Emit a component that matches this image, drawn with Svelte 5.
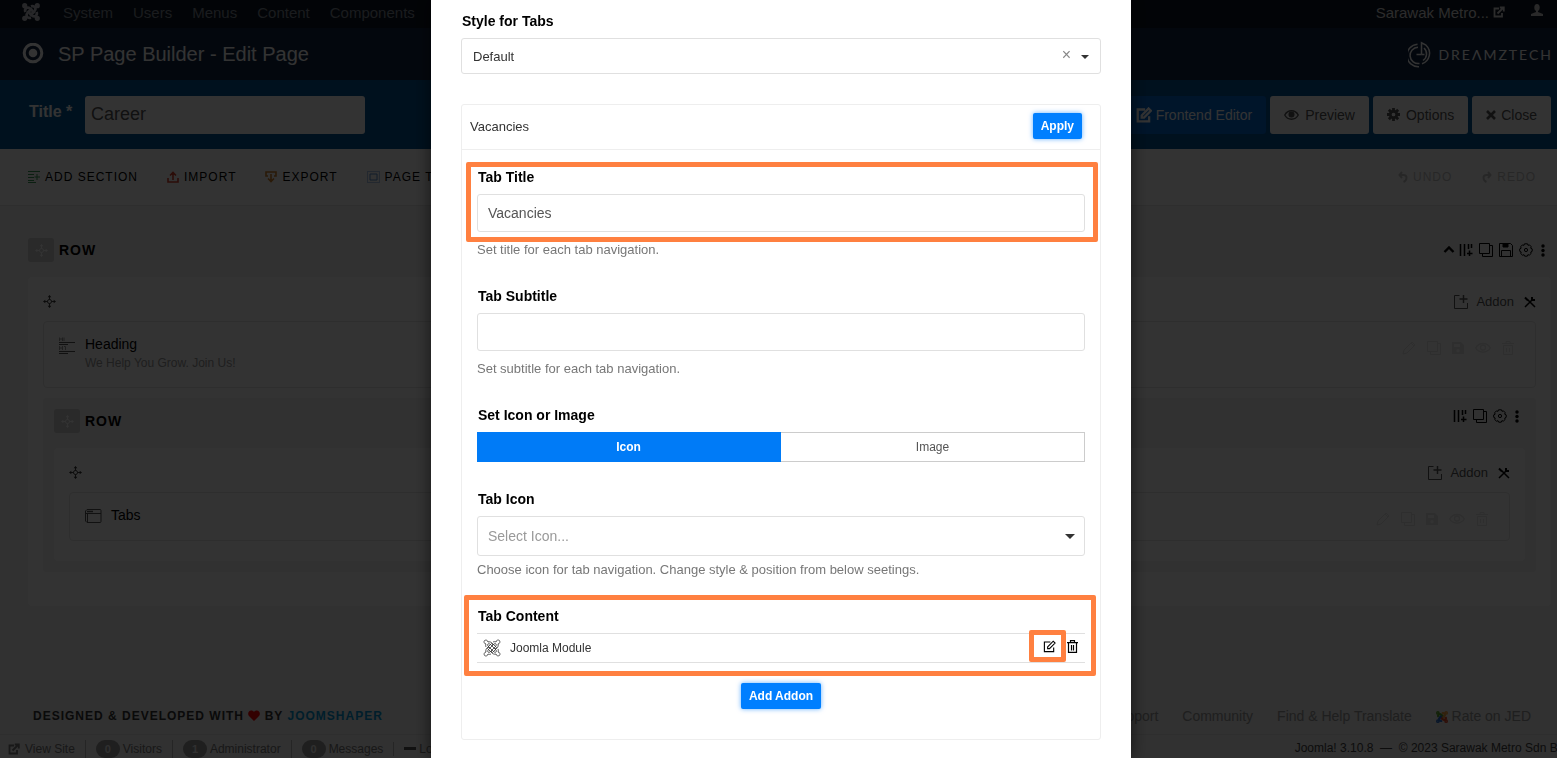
<script>
  const menu = ['System', 'Users', 'Menus', 'Content', 'Components'];
  const counters = [
    { n: 0, label: 'Visitors' },
    { n: 1, label: 'Administrator' },
    { n: 0, label: 'Messages' }
  ];
  let title = $state('Career');
  let tabTitle = $state('Vacancies');
  let subtitle = $state('');
  let media = $state('icon');
</script>

{#snippet knot(size, w)}
  <svg width={size} height={size} viewBox="0 0 16 16" fill="none" stroke="currentColor" stroke-width={w}>
    {#each [0, 90, 180, 270] as a}
      <g transform="rotate({a} 8 8)">
        <circle cx="2.4" cy="2.4" r="1.1" />
        <path d="M3 8C2 5 4.600 2.800 7.200 5L11.200 9" />
      </g>
    {/each}
  </svg>
{/snippet}

{#snippet outlineKnot()}
  <svg width="18" height="18" viewBox="0 0 18 18" fill="none" stroke="#333" stroke-width="0.8">
    {#each [0, 90, 180, 270] as a}
      <g transform="rotate({a} 9 9)">
        <path d="M3 8C2.500 6.800 2.600 5.800 3 5C.8 4.800.6 2.200 1.600 1.500C3 .6 4.800 1.300 5 3C6.500 2.500 8 3 9 4L13.500 8.500L12 10L7.500 5.500C5.500 3.800 3.800 5.200 5 7L6.500 8.500" />
      </g>
    {/each}
  </svg>
{/snippet}

{#snippet move()}
  <svg width="13" height="13" viewBox="0 0 14 14" fill="none" stroke="currentColor">
    <circle cx="7" cy="7" r="2.2" />
    <path d="M7 5V1M7 9v4M5 7H1M9 7h4" />
    <path fill="currentColor" stroke="none" d="M7 0l2 2.500H5zM7 14l2-2.500H5zM0 7l2.500-2v4zM14 7l-2.500-2v4z" />
  </svg>
{/snippet}

{#snippet columns()}
  <svg width="14" height="14" viewBox="0 0 14 14" fill="none" stroke="currentColor" stroke-width="1.500">
    <path d="M1.500 1v12M5.500 1v12M9.500 1v5M12.500 1v4M10.500 7.500v5.500M8 10.500h5.500" />
  </svg>
{/snippet}

{#snippet copy()}
  <svg width="14" height="14" viewBox="0 0 14 14" fill="none" stroke="currentColor">
    <path d="M.5.5h10v10H.5zM10.500 2.500h3v11h-10v-3" />
  </svg>
{/snippet}

{#snippet gear()}
  <svg width="14" height="14" viewBox="0 0 14 14" fill="none" stroke="currentColor">
    <path d="M5.500.8h3l.5 1.500 1.500-.4 1.700 1.800-.5 1.500 1.500.7v2.400l-1.400.7.3 1.500-1.700 1.600-1.500-.4-.6 1.500H5.700l-.7-1.500-1.500.5-1.800-1.700.5-1.500L.7 8.300V5.900l1.400-.7-.4-1.500 1.700-1.800 1.600.4z" />
    <circle cx="7" cy="7" r="1.600" />
  </svg>
{/snippet}

{#snippet dots()}
  <svg width="4" height="14" viewBox="0 0 4 14" fill="currentColor">
    <circle cx="2" cy="3" r="1.700" /><circle cx="2" cy="7.500" r="1.700" /><circle cx="2" cy="12" r="1.700" />
  </svg>
{/snippet}

{#snippet external()}
  <svg width="12" height="12" viewBox="0 0 12 12" fill="none" stroke="currentColor" stroke-width="1.800">
    <path d="M6 2.500H1.500v8H9V7M4.500 7.500L10 2M6.800 1.500h4v4" />
  </svg>
{/snippet}

{#snippet pen(size, w)}
  <svg width={size} height={size} viewBox="0 0 14 14" fill="none" stroke="currentColor" stroke-width={w}>
    <path d="M8 2.200H1.500v10.300h10V8" />
    <path d="M5 7.500L11 1.300l2 2L7 9.300H5z" />
  </svg>
{/snippet}

{#snippet addonBar()}
  <div class="addon-bar">
    <span class="drag">{@render move()}</span>
    <button class="plain add">
      <svg width="14" height="14" viewBox="0 0 14 14" fill="none" stroke="currentColor">
        <path d="M5.500.5h-5v13h13V8" /><path d="M9.500 0v8M5.500 4h8" stroke-width="1.500" />
      </svg>
      Addon
    </button>
    <button class="plain tools" aria-label="Column options">
      <svg width="12" height="12" viewBox="0 0 12 12" fill="none" stroke="currentColor" stroke-width="1.500">
        <path d="M1 11l6.500-6.500M11 11L4 4" /><path stroke-width="2" d="M1 1.500l3 3M8 1v3h3" />
      </svg>
    </button>
  </div>
{/snippet}

{#snippet actions()}
  <div class="actions">
    <svg width="14" height="14" viewBox="0 0 14 14" fill="none" stroke="currentColor"><path d="M1 13l1-4L10 1l3 3-8 8zM9 2l3 3" /></svg>
    {@render copy()}
    <svg width="12" height="12" viewBox="0 0 12 12"><path fill="currentColor" fill-rule="evenodd" d="M0 0h9l3 3v9H0zM2 2v3h6V2zM6 7a1.700 1.700 0 100 3.400A1.700 1.700 0 006 7z" /></svg>
    <svg width="16" height="12" viewBox="0 0 16 12" fill="none" stroke="currentColor" stroke-width="1.300"><path d="M.7 6C4 0 12 0 15.300 6 12 11.500 4 11.500.7 6z" /><circle cx="8" cy="5.500" r="2.500" /></svg>
    <svg width="12" height="14" viewBox="0 0 12 14" fill="none" stroke="currentColor"><path d="M0 2.500h12M4 2.500v-2h4v2M1.500 4.500v9h9v-9zM4.500 7v4M7.500 7v4" /></svg>
  </div>
{/snippet}

<div class="page">
  <nav class="top">
    <span class="joomla">{@render knot(18, 2.4)}</span>
    {#each menu as m}<a href="#{m}">{m}</a>{/each}
    <a class="site" href="#site">Sarawak Metro... {@render external()}</a>
    <svg class="user" width="12" height="12" viewBox="0 0 12 12" fill="currentColor"><ellipse cx="6" cy="3.500" rx="2.700" ry="3.500" /><path d="M5 6h2v2l5 2v2H0v-2l5-2z" /></svg>
  </nav>

  <header>
    <svg width="22" height="22" viewBox="0 0 22 22"><circle cx="11" cy="10" r="8.800" fill="none" stroke="currentColor" stroke-width="3" /><circle cx="11" cy="10" r="4.300" fill="currentColor" /></svg>
    <h1>SP Page Builder - Edit Page</h1>
    <div class="brand">
      <svg width="25" height="27" viewBox="0 0 25 27" fill="none" stroke="currentColor" stroke-width="1.500">
        <path d="M9.500 3.200A11 11 0 1011 25.700" />
        <path d="M10 6.200a8.200 8.200 0 101.500 16.300" />
        <path d="M13.500 13.500H8.500M13.500 13.500V1.800l4.500 2.400a11 11 0 01-4 18.500" />
        <path d="M16 7a8 8 0 01-1 12.500M16.500 13.500h-3" />
      </svg>
      <span>DREΛMZTECH</span>
    </div>
  </header>

  <div class="titlebar">
    <label for="page-title">Title *</label>
    <input id="page-title" bind:value={title} />
    <div class="buttons">
      <button class="front">{@render pen(16, 2)}Frontend Editor</button>
      <button>
        <svg width="15" height="12" viewBox="0 0 16 12" fill="none" stroke="currentColor" stroke-width="1.500"><path d="M.8 6C4 0 12 0 15.200 6 12 12 4 12 .8 6z" /><circle cx="8" cy="5.500" r="2.500" fill="currentColor" /></svg>Preview
      </button>
      <button>
        <svg width="13" height="13" viewBox="0 0 14 14" fill="none" stroke="currentColor"><circle cx="7" cy="7" r="3.500" stroke-width="3" /><path stroke-width="3" d="M7 0v3M7 11v3M0 7h3M11 7h3M2 2l2 2M10 10l2 2M2 12l2-2M10 4l2-2" /></svg>Options
      </button>
      <button class="close">
        <svg width="10" height="10" viewBox="0 0 10 10" stroke="currentColor" stroke-width="2.600"><path d="M1 1l8 8M9 1L1 9" /></svg>Close
      </button>
    </div>
  </div>

  <div class="toolbar">
    <button class="plain">
      <svg width="12" height="12" viewBox="0 0 12 12" fill="none" stroke="#3b9a55"><path d="M0 .5h12M0 3.500h6M0 6.500h6M0 9.500h6M0 11.500h8M9 3v6M6.500 6h5.500" /></svg>Add Section
    </button>
    <button class="plain">
      <svg width="12" height="12" viewBox="0 0 12 12" fill="none" stroke="#d8402a" stroke-width="1.600"><path d="M1 7v4h10V7M6 9V2M3 4.500L6 1.500l3 3" /></svg>Import
    </button>
    <button class="plain">
      <svg width="12" height="12" viewBox="0 0 12 12" fill="none" stroke="#d0802a" stroke-width="1.600"><path d="M3 5H1V1h10v4H9M6 3v7M3 7.500l3 3 3-3" /></svg>Export
    </button>
    <button class="plain">
      <svg width="13" height="12" viewBox="0 0 13 12" fill="none" stroke="#5a8ed0"><path stroke-dasharray="1 1" d="M.5.5h12v11H.5z" /><path d="M3 3h7v6H3z" /></svg>Page Templates
    </button>
    <div class="history">
      <button class="plain" disabled>
        <svg width="10" height="12" viewBox="0 0 10 12" fill="none" stroke="currentColor" stroke-width="2"><path d="M4 1L1.500 4l2.500 3M1.500 4h4c4 0 4 5 0 7" /></svg>Undo
      </button>
      <button class="plain" disabled>
        <svg width="10" height="12" viewBox="0 0 10 12" fill="none" stroke="currentColor" stroke-width="2"><path d="M6 1l2.500 3L6 7M8.500 4h-4c-4 0-4 5 0 7" /></svg>Redo
      </button>
    </div>
  </div>

  <main>
    <div class="row-head">
      <span class="handle">{@render move()}</span><strong>ROW</strong>
      <div class="row-tools">
        <svg class="chev" width="12" height="8" viewBox="0 0 12 8" fill="none" stroke="currentColor" stroke-width="2.400"><path d="M1.500 6L6 1.500 10.500 6" /></svg>
        {@render columns()}
        {@render copy()}
        <svg width="14" height="14" viewBox="0 0 14 14" fill="none" stroke="currentColor"><path d="M.5.5h11l2 2v11H.5zM2.500 13V7.500h9V13" /><path fill="currentColor" d="M4 1h5v3H4z" /></svg>
        {@render gear()}
        {@render dots()}
      </div>
    </div>
    <section class="column">
      {@render addonBar()}
      <article class="addon heading">
        <svg width="17" height="17" viewBox="0 0 17 17" fill="none" stroke="#555"><path d="M.5.500v3.500M3.500.500v3.500M.5 2h3M5 .5v3.500M.5 9v4M3.500 9v4M.5 11h3M5 9.500h1.500v3.500" stroke="#999" /><path d="M0 5.500h16M0 7.500h9M0 14.500h16M0 16.500h9" /></svg>
        <div><h3>Heading</h3><p>We Help You Grow. Join Us!</p></div>
        {@render actions()}
      </article>
      <div class="nested">
        <div class="row-head">
          <span class="handle">{@render move()}</span><strong>ROW</strong>
          <div class="row-tools">
            {@render columns()}
            {@render copy()}
            {@render gear()}
            {@render dots()}
          </div>
        </div>
        <section class="column">
          {@render addonBar()}
          <article class="addon tabs">
            <svg width="17" height="15" viewBox="0 0 17 15" fill="none" stroke="#555"><path d="M2 1.500h13q1 0 1 1v11q0 1-1 1H2l-1.500-1.500v-10zM.5 5.500h15.500M2.500 5.500V14" /><path d="M2 3.500h6" stroke-width="1.500" /></svg>
            <div><h3>Tabs</h3></div>
            {@render actions()}
          </article>
        </section>
      </div>
    </section>
  </main>

  <footer>
    <p>DESIGNED &amp; DEVELOPED WITH
      <svg width="12" height="11" viewBox="0 0 12 11" fill="#f00"><path d="M6 11L1 6C-1.500 3 2-2 6 1.700 10-2 13.500 3 11 6z" /></svg>
      BY <a href="#shaper">JOOMSHAPER</a></p>
    <div class="links">
      <a href="#support">Support</a>
      <a href="#community">Community</a>
      <a href="#translate">Find &amp; Help Translate</a>
      <a href="#jed">
        <svg width="12" height="12" viewBox="0 0 16 16" fill="none" stroke-width="3">
          {#each ['#5ba829', '#f9a541', '#e84a2a', '#2a6fd0'] as c, i}
            <g stroke={c} transform="rotate({i * 90} 8 8)"><circle cx="2.500" cy="2.500" r="1" /><path d="M3 8C2 5 4.600 2.800 7.200 5L9.500 7.500" /></g>
          {/each}
        </svg>
        Rate on JED</a>
    </div>
  </footer>

  <div class="status">
    <a href="#view">{@render external()}View Site</a>
    {#each counters as c}<span><b>{c.n}</b>{c.label}</span>{/each}
    <span class="out"><i></i>Log out</span>
    <span class="copyright">Joomla! 3.10.8 &nbsp;—&nbsp; © 2023 Sarawak Metro Sdn Bhd</span>
  </div>
</div>

<div class="backdrop">
  <div class="modal" role="dialog" aria-label="Tabs settings">
    <label class="label first" for="style">Style for Tabs</label>
    <div class="pick">
      <select id="style"><option>Default</option></select>
      <span class="clear">×</span><span class="caret"></span>
    </div>

    <div class="card">
      <div class="card-head"><span>Vacancies</span><button class="primary">Apply</button></div>
      <div class="card-body">
        <div class="marked">
          <label class="label" for="tab-title">Tab Title</label>
          <input id="tab-title" bind:value={tabTitle} />
          <div class="mark title-mark"></div>
        </div>
        <p class="hint">Set title for each tab navigation.</p>

        <label class="label next" for="tab-sub">Tab Subtitle</label>
        <input id="tab-sub" bind:value={subtitle} />
        <p class="hint">Set subtitle for each tab navigation.</p>

        <div class="label next">Set Icon or Image</div>
        <div class="toggle">
          <button class:on={media === 'icon'} onclick={() => (media = 'icon')}>Icon</button>
          <button class:on={media === 'image'} onclick={() => (media = 'image')}>Image</button>
        </div>

        <label class="label next" for="tab-icon">Tab Icon</label>
        <div class="pick tall">
          <select id="tab-icon"><option>Select Icon...</option></select>
          <span class="caret"></span>
        </div>
        <p class="hint tight">Choose icon for tab navigation. Change style &amp; position from below seetings.</p>

        <div class="marked next">
          <div class="label">Tab Content</div>
          <div class="module">
            {@render outlineKnot()}
            <span>Joomla Module</span>
            <button class="plain edit" aria-label="Edit">{@render pen(13, 1.2)}<span class="mark edit-mark"></span></button>
            <button class="plain trash" aria-label="Delete">
              <svg width="11" height="13" viewBox="0 0 11 13" fill="none" stroke="currentColor" stroke-width="1.200"><path d="M0 2.700h11M3.500 2.500V.7h4v1.800M1.500 3v9.300h8V3M4.500 5v5.500M6.500 5v5.500" /></svg>
            </button>
          </div>
          <div class="mark content-mark"></div>
        </div>
        <button class="primary more">Add Addon</button>
      </div>
    </div>
  </div>
</div>

<style>
  :global(body) { margin: 0; overflow: hidden; }
  :global(*) { box-sizing: border-box; }
  .page, .backdrop, button, input, select { font-family: "Liberation Sans", Arial, sans-serif; }
  .page { display: flex; flex-direction: column; height: 100vh; overflow: hidden; background: #f2f2f2; color: #000; }
  svg { flex: none; }
  a { color: inherit; text-decoration: none; }
  p, h1, h3 { margin: 0; font-weight: 400; }
  .plain { display: flex; align-items: center; border: 0; padding: 0; background: none; color: inherit; font-size: inherit; }

  .top { display: flex; align-items: center; gap: 20px; height: 28px; flex: none; padding: 0 14px 4px 22px; background: #0d1623; color: #808a96; font-size: 15px; }
  .joomla { display: flex; margin-right: 3px; color: #c0c4ca; }
  .site { display: flex; align-items: center; gap: 4px; margin-left: auto; color: #d9d9d9; }
  .user { margin: 0 0 4px 6px; color: #ccc; }

  header { display: flex; align-items: center; gap: 14px; height: 52px; flex: none; padding: 0 6px 0 22px; background: #132644; color: #fff; }
  h1 { font-size: 20px; }
  .brand { display: flex; align-items: center; gap: 5px; margin-left: auto; font: 14px Lato, sans-serif; letter-spacing: 2px; }
  .brand span { margin-right: -2px; }

  .titlebar { display: flex; align-items: center; height: 69px; flex: none; padding: 0 6px 0 29px; background: #005494; }
  .titlebar label { width: 56px; padding-bottom: 6px; color: #fff; font-size: 16px; font-weight: 700; }
  .titlebar input { width: 280px; height: 38px; border: 0; border-radius: 3px; padding: 0 6px; background: #fff; color: #555; font-size: 18px; }
  .buttons { display: flex; gap: 4px; margin-left: auto; }
  .buttons button { display: flex; align-items: center; justify-content: center; gap: 6px; height: 38px; padding: 0 14px; border: 0; border-radius: 3px; background: #fff; color: #555; font-size: 14px; }
  .buttons .front { gap: 4px; background: #0068d0; color: #fff; }
  .buttons .close { gap: 5px; }

  .toolbar { display: flex; align-items: center; gap: 29px; height: 57px; flex: none; padding: 0 21px 0 28px; border-bottom: 1px solid #e5e5e5; background: #fff; font-size: 12px; }
  .toolbar .plain { gap: 5px; letter-spacing: 1px; text-transform: uppercase; white-space: nowrap; }
  .history { display: flex; gap: 30px; margin-left: auto; color: #c4c4c4; }

  main { flex: 1; padding: 32px 6px 0 28px; }
  .row-head { display: flex; align-items: center; gap: 5px; height: 24px; font-size: 14px; letter-spacing: 1px; }
  .handle { display: flex; align-items: center; justify-content: center; width: 26px; height: 24px; border-radius: 3px; background: #d0d0d0; color: #fff; }
  .row-tools { display: flex; align-items: center; gap: 6px; margin: 0 6px 0 auto; }
  .row-tools .chev { margin-right: -2px; }
  .row-tools :global(svg:last-child) { margin-left: 2px; }
  .column { margin-top: 15px; padding: 15px 15px 34px; border-radius: 4px; background: #fff; }
  .addon-bar { display: flex; align-items: center; height: 19px; margin-bottom: 10px; color: #000; font-size: 13px; }
  .drag { display: flex; flex: 1; color: #333; }
  .add { gap: 8px; color: #555; }
  .tools { margin-left: 10px; }
  .addon { display: flex; align-items: flex-start; border: 1px solid #e5e5e5; border-radius: 4px; padding: 15px 21px 0 15px; gap: 9px; }
  .addon h3 { font-size: 14px; line-height: 14px; }
  .addon p { color: #999; font-size: 12px; line-height: 24px; }
  .heading { height: 67px; }
  .tabs { height: 49px; }
  .actions { display: flex; align-items: center; gap: 11px; margin: 4px 0 0 auto; color: #e4e4e4; }
  .nested { margin-top: 10px; padding: 11px; border-radius: 4px; background: #f2f2f2; }
  .nested .row-tools { align-self: flex-start; }
  .nested .column { padding-bottom: 20px; }

  footer { display: flex; align-items: center; justify-content: space-between; height: 36px; flex: none; padding: 0 26px 0 33px; }
  footer p { font-size: 12px; font-weight: 700; letter-spacing: 1px; color: #333; white-space: nowrap; }
  footer p svg { vertical-align: -1px; }
  footer p a { color: #0096d6; }
  .links { display: flex; gap: 24px; color: #999; font-size: 14px; }
  .links svg { vertical-align: -2px; }
  .status { display: flex; align-items: center; height: 24px; flex: none; padding: 4px 0 0 8px; border-top: 1px solid #e5e5e5; color: #777; font-size: 12px; white-space: nowrap; }
  .status > a, .status > span { display: flex; align-items: center; margin-right: 10px; }
  .status > a { gap: 5px; }
  .status > span:not(.copyright) { padding-left: 10px; border-left: 1px solid #bbb; gap: 3px; }
  .status b { width: 24px; border-radius: 10px; background: #999; color: #eee; text-align: center; line-height: 18px; font-size: 11px; }
  .status .out { gap: 5px; }
  .out i { width: 12px; height: 3px; background: #555; }
  .status .copyright { margin: 0 -14px 2px auto; color: #444; }

  .backdrop { position: fixed; inset: 0; display: flex; justify-content: center; align-items: stretch; overflow: hidden; padding-left: 5px; background: rgba(0, 0, 0, .8); }
  .modal { width: 700px; max-width: 100%; padding: 12px 30px 0; background: #fff; box-shadow: 0 0 16px rgba(0, 0, 0, .6); }
  .label { display: block; margin-bottom: 8px; padding-left: 1px; color: #000; font-size: 14px; font-weight: 700; line-height: 18px; }
  .pick { position: relative; height: 36px; }
  select { appearance: none; width: 100%; height: 100%; border: 1px solid #e0e0e0; border-radius: 3px; padding: 1px 11px 0; background: #fff; color: #333; font-size: 13px; }
  .tall { height: 40px; }
  .tall select { padding: 0 10px; color: #999; font-size: 14px; }
  .caret { position: absolute; right: 12px; top: 50%; margin-top: -1px; border: 4px solid transparent; border-top-color: #333; border-bottom: 0; pointer-events: none; }
  .tall .caret { right: 10px; margin-top: -2px; border-width: 5px; border-bottom: 0; }
  .clear { position: absolute; right: 30px; top: 8px; color: #888; font-size: 16px; line-height: 18px; pointer-events: none; }

  .card { margin-top: 30px; border: 1px solid #eee; border-radius: 3px; }
  .card-head { display: flex; align-items: center; justify-content: space-between; height: 45px; padding: 0 18px 2px 8px; border-bottom: 1px solid #eee; color: #333; font-size: 13px; }
  .primary { height: 26px; border: 0; border-radius: 2px; padding: 0 8px; background: #007fff; color: #fff; box-shadow: 0 0 5px rgba(0, 127, 255, .6); font-size: 12px; font-weight: 700; }
  .card-body { padding: 18px 15px 30px; }
  .marked { position: relative; }
  .card-body input { display: block; width: 100%; height: 38px; border: 1px solid #e0e0e0; border-radius: 3px; padding: 0 10px; color: #555; font-size: 14px; }
  .hint { margin-top: 8px; color: #777; font-size: 13px; line-height: 19px; }
  .hint.tight { margin-top: 4px; }
  .next { margin-top: 28px; }
  .toggle { display: flex; height: 30px; }
  .toggle button { flex: 1; border: 1px solid #ccc; border-left: 0; background: #fff; color: #555; font-size: 12px; }
  .toggle .on { border-color: #007bf7; background: #007bf7; color: #fff; font-weight: 700; }
  .module { display: flex; align-items: center; height: 30px; padding: 0 7px 0 6px; border: solid #e0e0e0; border-width: 1px 0; color: #333; font-size: 12px; }
  .module > span { flex: 1; padding-left: 9px; }
  .module .plain { height: 28px; padding-bottom: 3px; color: #000; }
  .module .edit { position: relative; margin-right: 11px; }
  .mark { position: absolute; border: 5px solid #ff8040; border-radius: 2px; pointer-events: none; }
  .title-mark { inset: -6px -13px -10px -11px; }
  .content-mark { inset: -12px -11px -13px -13px; }
  .edit-mark { inset: -4px -10px 0 -14px; }
  .more { display: block; margin: 20px auto 0; }
  @media (max-width: 700px) { .backdrop { padding-left: 0; } }
</style>
